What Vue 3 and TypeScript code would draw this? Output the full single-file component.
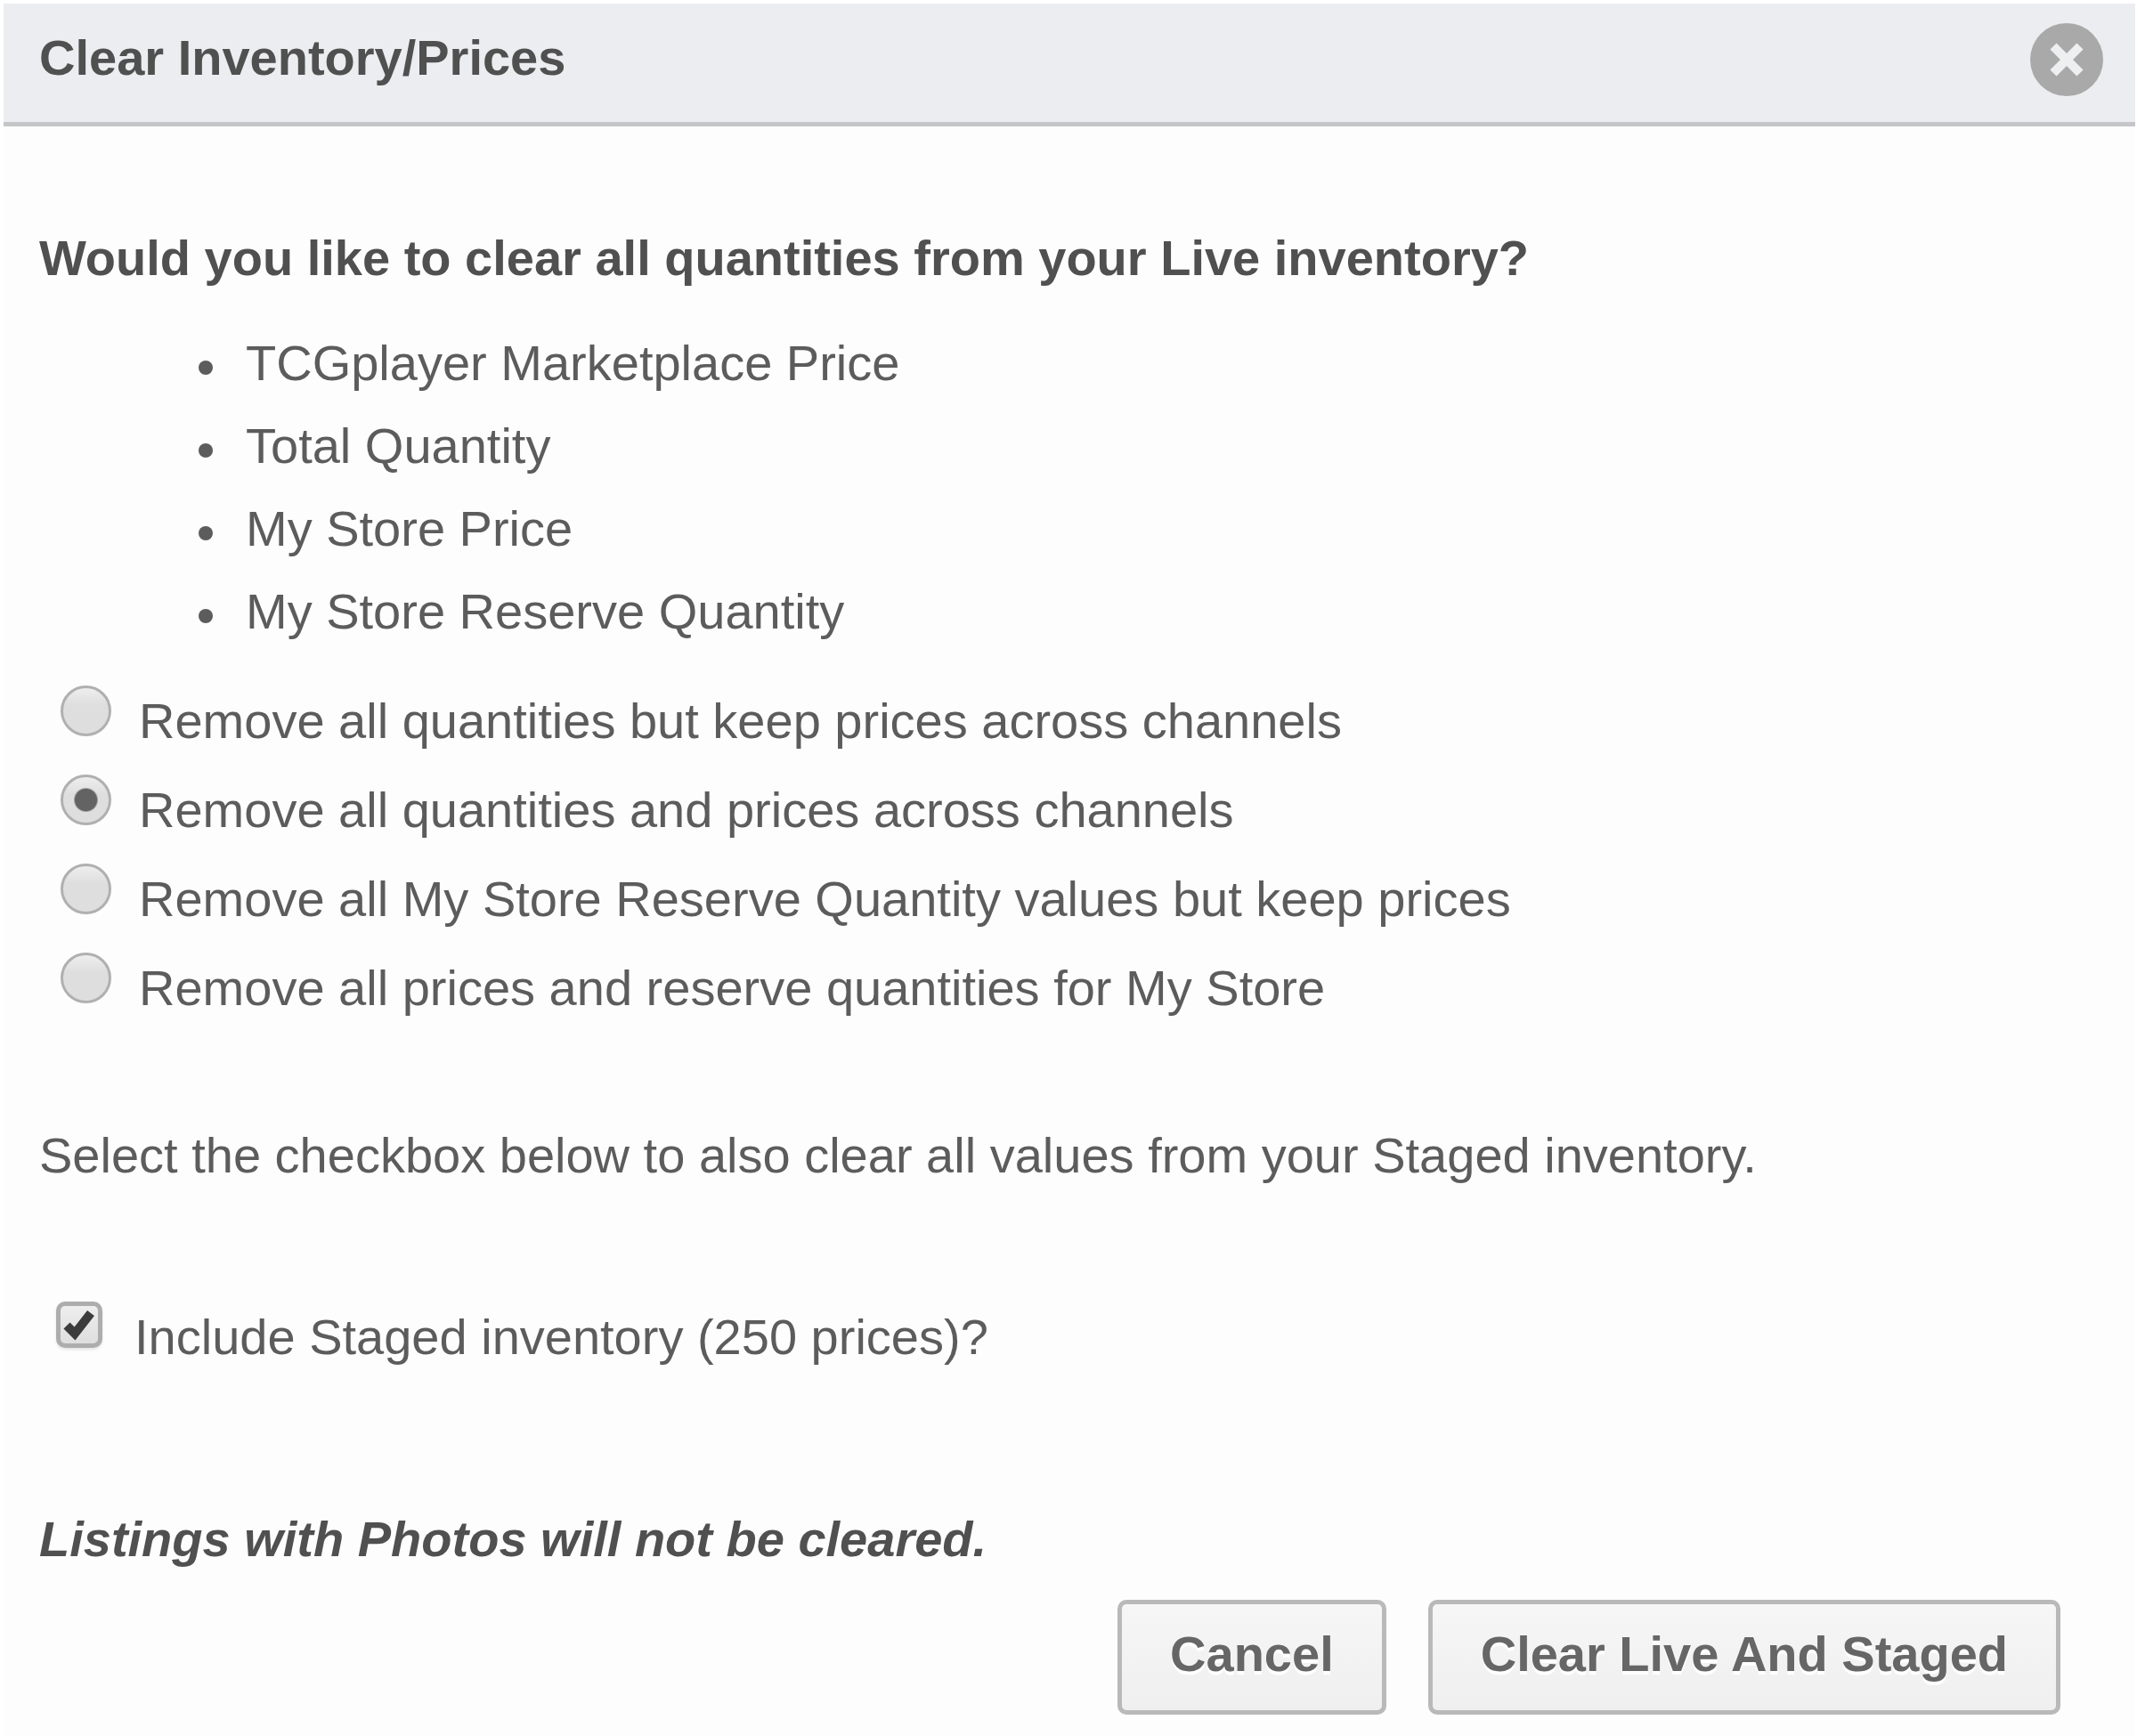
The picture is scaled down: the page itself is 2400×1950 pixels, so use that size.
<script setup lang="ts">
import { ref } from 'vue'

interface ClearOption {
  id: string
  label: string
}

const affectedFields: string[] = [
  'TCGplayer Marketplace Price',
  'Total Quantity',
  'My Store Price',
  'My Store Reserve Quantity',
]

const options: ClearOption[] = [
  { id: 'quantities', label: 'Remove all quantities but keep prices across channels' },
  { id: 'quantities-prices', label: 'Remove all quantities and prices across channels' },
  { id: 'reserve', label: 'Remove all My Store Reserve Quantity values but keep prices' },
  { id: 'my-store', label: 'Remove all prices and reserve quantities for My Store' },
]

const selected = ref<string>('quantities-prices')
const includeStaged = ref<boolean>(true)
</script>

<template>
  <section class="dialog" role="dialog" aria-labelledby="dialog-title">
    <header class="dialog-header">
      <h1 id="dialog-title" class="title">Clear Inventory/Prices</h1>
      <button class="close" type="button" aria-label="Close">
        <svg viewBox="0 0 82 82" aria-hidden="true">
          <circle cx="41" cy="41" r="41" fill="#a9a9a9" />
          <path d="M26 26 L56 56 M56 26 L26 56" stroke="#eeeff1" stroke-width="10" />
        </svg>
      </button>
    </header>

    <form class="dialog-body" @submit.prevent>
      <h2 class="question">Would you like to clear all quantities from your Live inventory?</h2>
      <ul class="fields">
        <li v-for="field in affectedFields" :key="field" class="field">{{ field }}</li>
      </ul>

      <div class="options" role="radiogroup" aria-label="Clear options">
        <label v-for="option in options" :key="option.id" class="choice">
          <input v-model="selected" class="radio" type="radio" name="clear-option" :value="option.id" />
          <span class="choice-text">{{ option.label }}</span>
        </label>
      </div>

      <p class="hint">Select the checkbox below to also clear all values from your Staged inventory.</p>

      <label class="choice staged">
        <span class="check">
          <input v-model="includeStaged" class="checkbox" type="checkbox" />
          <svg v-if="includeStaged" class="tick" viewBox="0 0 52 52" aria-hidden="true">
            <path d="M12 27 L21 36 L39 13" fill="none" stroke="#3c3c3c" stroke-width="10" />
          </svg>
        </span>
        <span class="choice-text">Include Staged inventory (250 prices)?</span>
      </label>

      <p class="notice">Listings with Photos will not be cleared.</p>

      <div class="actions">
        <button class="button" type="button">Cancel</button>
        <button class="button" type="submit">Clear Live And Staged</button>
      </div>
    </form>
  </section>
</template>

<style>
body {
  background: #fff;
}
</style>

<style scoped>
.dialog {
  margin: 4px 2px 0 4px;
  background: #fdfdfd;
  color: #5c5c5c;
  font-family: "Liberation Sans", Arial, sans-serif;
  font-size: 56px;
  line-height: 64px;
}

.dialog-header {
  display: flex;
  align-items: center;
  justify-content: space-between;
  padding: 22px 36px 29px 40px;
  border-bottom: 5px solid #c5c6c8;
  background: #ecedf0;
}

.title,
.question {
  margin: 0;
  color: #505050;
  font-size: 56px;
  font-weight: bold;
}

.title {
  padding-bottom: 4px;
}

.close {
  width: 82px;
  height: 82px;
  padding: 0;
  border: 0;
  border-radius: 50%;
  background: none;
}

.close svg {
  display: block;
}

.dialog-body {
  padding: 116px 84px 24px 40px;
}

.fields {
  margin: 39px 0 37px;
  padding-left: 179px;
  line-height: 93px;
  list-style: none;
}

.field {
  display: flex;
  align-items: center;
  gap: 37px;
}

.field::before {
  content: "";
  width: 16px;
  height: 16px;
  margin-top: 10px;
  border-radius: 50%;
  background: #5c5c5c;
}

.options {
  display: flex;
  flex-direction: column;
  gap: 28px;
  padding-left: 24px;
}

.choice {
  display: flex;
  align-items: flex-start;
  gap: 31px;
}

.choice-text {
  padding-top: 8px;
}

.radio,
.checkbox {
  appearance: none;
  display: block;
  box-sizing: border-box;
  flex: none;
  margin: 0;
}

.radio {
  width: 57px;
  height: 57px;
  border: 3px solid #b0b0b0;
  border-radius: 50%;
  background: linear-gradient(#eeeeee, #dedede 38%, #dedede);
}

.radio:checked {
  background:
    radial-gradient(circle, #636363 12px, transparent 14px),
    linear-gradient(#eeeeee, #dedede 38%, #dedede);
}

.hint {
  margin: 124px 0 132px;
}

.staged {
  gap: 36px;
  padding-left: 19px;
}

.check {
  position: relative;
  flex: none;
}

.checkbox {
  width: 52px;
  height: 52px;
  border: 5px solid #adadad;
  border-radius: 10px;
  background: linear-gradient(#eeeeee, #dedede);
  box-shadow: 0 2px 3px #e4e4e4;
}

.tick {
  position: absolute;
  inset: 0;
  pointer-events: none;
}

.notice {
  margin: 163px 0 36px;
  color: #505050;
  font-style: italic;
  font-weight: bold;
}

.actions {
  display: flex;
  justify-content: flex-end;
  gap: 47px;
}

.button {
  padding: 24px 54px 31px;
  border: 5px solid #b9b9b9;
  border-radius: 10px;
  background: linear-gradient(#f6f6f6, #efefef);
  color: #666;
  font: inherit;
  font-weight: bold;
  text-shadow: 0 4px 0 #fff;
}
</style>
